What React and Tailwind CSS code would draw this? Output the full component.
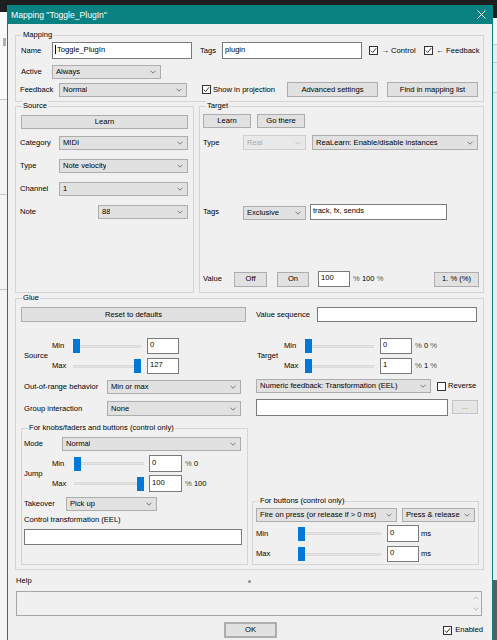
import React from "react";

const Chev = ({ color = "#5f5f5f" }) => (
  <svg width="6" height="4" viewBox="0 0 6 4" className="shrink-0">
    <path d="M0.5 0.7 L3 3.2 L5.5 0.7" stroke={color} strokeWidth="0.8" fill="none" />
  </svg>
);

const Sel = ({ text, cls = "", disabled = false }) => (
  <div
    className={`flex items-center justify-between shrink-0 border pl-[3px] pr-[4px] ${
      disabled ? "border-[#d0d0d0] bg-[#e9e9e9] text-[#a9a9a9]" : "border-[#adadad] bg-[#e1e1e1] text-black"
    } ${cls}`}
  >
    <span className="whitespace-nowrap overflow-hidden">{text}</span>
    <Chev color={disabled ? "#b8b8b8" : "#5f5f5f"} />
  </div>
);

const Btn = ({ children, cls = "" }) => (
  <div className={`flex items-center justify-center shrink-0 border border-[#adadad] bg-[#e1e1e1] whitespace-nowrap ${cls}`}>
    {children}
  </div>
);

const Inp = ({ children, cls = "" }) => (
  <div className={`flex items-center shrink-0 border border-[#7a7a7a] bg-white pl-[2px] pb-[2px] whitespace-nowrap ${cls}`}>
    {children}
  </div>
);

const Check = ({ checked = true, cls = "" }) => (
  <div className={`w-[9px] h-[9px] shrink-0 border border-[#333333] bg-white flex items-center justify-center ${cls}`}>
    {checked && (
      <svg width="7" height="7" viewBox="0 0 7 7">
        <path d="M0.8 3.6 L2.7 5.5 L6.2 1.2" stroke="#222222" strokeWidth="0.9" fill="none" />
      </svg>
    )}
  </div>
);

const Slider = ({ cls = "", right = false }) => (
  <div className={`relative shrink-0 flex items-center ${cls}`}>
    <div className="h-[3px] w-full bg-[#e4e4e4] border-y border-[#dadada]" />
    <div
      className={`absolute top-1/2 -translate-y-1/2 w-[7px] h-[14px] bg-[#0078d7] ${right ? "right-0" : "left-0"}`}
    />
  </div>
);

const Group = ({ title, cls = "", children }) => (
  <div className={`relative border border-[#d5d5d5] shrink-0 flex flex-col ${cls}`}>
    <span className="absolute -top-[6px] left-[6px] bg-[#f0f0f0] px-[1px] leading-[10px] whitespace-nowrap">
      {title}
    </span>
    {children}
  </div>
);

const Lbl = ({ children, cls = "" }) => <div className={`shrink-0 whitespace-nowrap ${cls}`}>{children}</div>;

export default function App() {
  return (
    <div className="w-[497px] h-[640px] overflow-hidden flex flex-col bg-[#f0f0f0] font-['Liberation_Sans',Arial,sans-serif] text-[7.6px] leading-[10px] text-black">
      <div className="h-[5px] shrink-0 bg-[#1e1e1e]" />
      <div className="flex flex-1 min-h-0">
        {/* left background strip */}
        <div className="w-[7px] shrink-0 flex flex-col bg-[#f4f4f4]">
          <div className="h-[7px] bg-[#1e1e1e]" />
          <div className="h-[88px] border-b border-[#c8c8c8] bg-[#fafafa]">
            <div className="mt-[26px] ml-[3px] w-[3px] h-[8px] bg-[#b0b0b0]" />
          </div>
          <div className="h-[95px] border-b border-[#c8c8c8]" />
          <div className="h-[95px] border-b border-[#c8c8c8]" />
          <div className="flex-1" />
        </div>

        {/* dialog window */}
        <div className="w-[486px] shrink-0 flex flex-col border-x border-[#0a8282] bg-[#f0f0f0]">
          <div className="h-[19px] shrink-0 bg-[#0a8282] flex items-center justify-between pl-[3px] pr-[6px] text-white text-[8.6px]">
            <span>Mapping "Toggle_PlugIn"</span>
            <svg width="9" height="9" viewBox="0 0 9 9">
              <path d="M0.5 0.5 L8.5 8.5 M8.5 0.5 L0.5 8.5" stroke="#ffffff" strokeWidth="0.9" />
            </svg>
          </div>

          <div className="flex flex-col pl-[7px] pr-[8px]">
            {/* Mapping */}
            <Group title="Mapping" cls="mt-[11px] w-[469px] h-[67px]">
              <div className="mt-[6px] h-[17px] flex items-center">
                <Lbl cls="ml-[5px] w-[31px]">Name</Lbl>
                <Inp cls="w-[140px] h-[17px] border-[#3d8ee0]">
                  <span className="w-[1px] h-[9px] bg-black mr-[1px]" />
                  Toggle_PlugIn
                </Inp>
                <Lbl cls="ml-[8px] w-[22px]">Tags</Lbl>
                <Inp cls="w-[140px] h-[17px]">plugin</Inp>
                <div className="ml-[7px] w-[55px] shrink-0 flex items-center">
                  <Check />
                  <span className="ml-[3px] whitespace-nowrap">
                    <b className="text-[8px]">→</b> Control
                  </span>
                </div>
                <div className="flex items-center">
                  <Check />
                  <span className="ml-[3px] whitespace-nowrap">
                    <b className="text-[8px]">←</b> Feedback
                  </span>
                </div>
              </div>
              <div className="mt-[6px] h-[14px] flex items-center">
                <Lbl cls="ml-[5px] w-[31px]">Active</Lbl>
                <Sel cls="w-[109px] h-[14px]" text="Always" />
              </div>
              <div className="mt-[3px] h-[15px] flex items-center">
                <Lbl cls="ml-[4px] w-[39px]">Feedback</Lbl>
                <Sel cls="w-[128px] h-[14px]" text="Normal" />
                <div className="ml-[15px] w-[85px] shrink-0 flex items-center">
                  <Check />
                  <span className="ml-[2px] whitespace-nowrap">Show in projection</span>
                </div>
                <Btn cls="w-[91px] h-[15px]">Advanced settings</Btn>
                <Btn cls="ml-[9px] w-[91px] h-[15px]">Find in mapping list</Btn>
              </div>
            </Group>

            {/* Source / Target */}
            <div className="mt-[4px] h-[187px] flex shrink-0">
              <Group title="Source" cls="w-[179px] h-[187px]">
                <Btn cls="mt-[8px] ml-[5px] w-[167px] h-[14px]">Learn</Btn>
                <div className="mt-[7px] h-[14px] flex items-center">
                  <Lbl cls="ml-[4px] w-[39px]">Category</Lbl>
                  <Sel cls="w-[129px] h-[14px]" text="MIDI" />
                </div>
                <div className="mt-[9px] h-[14px] flex items-center">
                  <Lbl cls="ml-[4px] w-[39px]">Type</Lbl>
                  <Sel cls="w-[129px] h-[14px]" text="Note velocity" />
                </div>
                <div className="mt-[9px] h-[14px] flex items-center">
                  <Lbl cls="ml-[4px] w-[39px]">Channel</Lbl>
                  <Sel cls="w-[129px] h-[14px]" text="1" />
                </div>
                <div className="mt-[9px] h-[14px] flex items-center">
                  <Lbl cls="ml-[4px] w-[78px]">Note</Lbl>
                  <Sel cls="w-[90px] h-[14px]" text="88" />
                </div>
              </Group>
              <Group title="Target" cls="ml-[5px] w-[285px] h-[187px]">
                <div className="mt-[7px] h-[14px] flex">
                  <Btn cls="ml-[3px] w-[48px] h-[14px]">Learn</Btn>
                  <Btn cls="ml-[6px] w-[48px] h-[14px]">Go there</Btn>
                </div>
                <div className="mt-[7px] h-[15px] flex items-center">
                  <Lbl cls="ml-[3px] w-[40px]">Type</Lbl>
                  <Sel cls="w-[63px] h-[15px]" text="Real" disabled />
                  <Sel cls="ml-[6px] w-[166px] h-[15px]" text="ReaLearn: Enable/disable instances" />
                </div>
                <div className="mt-[54px] h-[16px] flex items-end">
                  <Lbl cls="ml-[3px] w-[40px] self-center">Tags</Lbl>
                  <Sel cls="w-[63px] h-[14px]" text="Exclusive" />
                  <Inp cls="ml-[4px] w-[137px] h-[16px]">track, fx, sends</Inp>
                </div>
                <div className="mt-[51px] h-[16px] flex items-center">
                  <Lbl cls="ml-[3px] w-[31px]">Value</Lbl>
                  <Btn cls="w-[33px] h-[15px]">Off</Btn>
                  <Btn cls="ml-[10px] w-[32px] h-[15px]">On</Btn>
                  <Inp cls="ml-[9px] w-[32px] h-[16px]">100</Inp>
                  <span className="ml-[3px] whitespace-nowrap">
                    <span className="text-[#555555]">%</span> 100 <span className="text-[#555555]">%</span>
                  </span>
                  <Btn cls="ml-auto mr-[4px] w-[45px] h-[15px]">1. % (%)</Btn>
                </div>
              </Group>
            </div>

            {/* Glue */}
            <Group title="Glue" cls="mt-[5px] w-[469px] h-[272px] !flex-row">
              <div className="w-[232px] shrink-0 flex flex-col">
                <Btn cls="mt-[8px] ml-[5px] w-[225px] h-[15px]">Reset to defaults</Btn>
                <div className="mt-[16px] h-[36px] flex items-center">
                  <Lbl cls="ml-[8px] w-[28px]">Source</Lbl>
                  <div className="flex flex-col gap-[4px]">
                    <div className="h-[16px] flex items-center">
                      <Lbl cls="w-[21px]">Min</Lbl>
                      <Slider cls="w-[68px] h-[16px]" />
                      <Inp cls="ml-[6px] w-[32px] h-[16px]">0</Inp>
                    </div>
                    <div className="h-[16px] flex items-center">
                      <Lbl cls="w-[21px]">Max</Lbl>
                      <Slider cls="w-[68px] h-[16px]" right />
                      <Inp cls="ml-[6px] w-[32px] h-[16px]">127</Inp>
                    </div>
                  </div>
                </div>
                <div className="mt-[6px] h-[14px] flex items-center">
                  <Lbl cls="ml-[8px] w-[83px]">Out-of-range behavior</Lbl>
                  <Sel cls="w-[134px] h-[14px]" text="Min or max" />
                </div>
                <div className="mt-[7px] h-[15px] flex items-center">
                  <Lbl cls="ml-[8px] w-[83px]">Group interaction</Lbl>
                  <Sel cls="w-[134px] h-[15px]" text="None" />
                </div>
                <Group title="For knobs/faders and buttons (control only)" cls="mt-[12px] ml-[5px] w-[227px] h-[137px]">
                  <div className="mt-[8px] h-[14px] flex items-center">
                    <Lbl cls="ml-[2px] w-[38px]">Mode</Lbl>
                    <Sel cls="w-[179px] h-[14px]" text="Normal" />
                  </div>
                  <div className="mt-[4px] h-[37px] flex items-center">
                    <Lbl cls="ml-[2px] w-[28px]">Jump</Lbl>
                    <div className="flex flex-col gap-[3px]">
                      <div className="h-[17px] flex items-center">
                        <Lbl cls="w-[22px]">Min</Lbl>
                        <Slider cls="w-[70px] h-[17px]" />
                        <Inp cls="ml-[5px] w-[33px] h-[17px]">0</Inp>
                        <span className="ml-[3px] whitespace-nowrap">
                          <span className="text-[#555555]">%</span> 0
                        </span>
                      </div>
                      <div className="h-[17px] flex items-center">
                        <Lbl cls="w-[22px]">Max</Lbl>
                        <Slider cls="w-[70px] h-[17px]" right />
                        <Inp cls="ml-[5px] w-[33px] h-[17px]">100</Inp>
                        <span className="ml-[3px] whitespace-nowrap">
                          <span className="text-[#555555]">%</span> 100
                        </span>
                      </div>
                    </div>
                  </div>
                  <div className="mt-[5px] h-[14px] flex items-center">
                    <Lbl cls="ml-[2px] w-[42px]">Takeover</Lbl>
                    <Sel cls="w-[91px] h-[14px]" text="Pick up" />
                  </div>
                  <Lbl cls="mt-[4px] h-[10px] ml-[2px]">Control transformation (EEL)</Lbl>
                  <Inp cls="mt-[4px] ml-[2px] w-[218px] h-[16px]" />
                </Group>
              </div>

              <div className="flex-1 flex flex-col">
                <div className="mt-[8px] h-[15px] flex items-center">
                  <Lbl cls="ml-[8px] w-[61px]">Value sequence</Lbl>
                  <Inp cls="w-[160px] h-[15px]" />
                </div>
                <div className="mt-[16px] h-[36px] flex items-center">
                  <Lbl cls="ml-[9px] w-[27px]">Target</Lbl>
                  <div className="flex flex-col gap-[4px]">
                    <div className="h-[16px] flex items-center">
                      <Lbl cls="w-[21px]">Min</Lbl>
                      <Slider cls="w-[69px] h-[16px]" />
                      <Inp cls="ml-[6px] w-[32px] h-[16px]">0</Inp>
                      <span className="ml-[3px] whitespace-nowrap">
                        <span className="text-[#555555]">%</span> 0 <span className="text-[#555555]">%</span>
                      </span>
                    </div>
                    <div className="h-[16px] flex items-center">
                      <Lbl cls="w-[21px]">Max</Lbl>
                      <Slider cls="w-[69px] h-[16px]" />
                      <Inp cls="ml-[6px] w-[32px] h-[16px]">1</Inp>
                      <span className="ml-[3px] whitespace-nowrap">
                        <span className="text-[#555555]">%</span> 1 <span className="text-[#555555]">%</span>
                      </span>
                    </div>
                  </div>
                </div>
                <div className="mt-[5px] h-[14px] flex items-center">
                  <Sel cls="ml-[8px] w-[175px] h-[14px]" text="Numeric feedback: Transformation (EEL)" />
                  <Check checked={false} cls="ml-[6px]" />
                  <span className="ml-[2px] whitespace-nowrap">Reverse</span>
                </div>
                <div className="mt-[6px] h-[17px] flex items-start">
                  <Inp cls="ml-[8px] w-[192px] h-[17px]" />
                  <Btn cls="ml-[4px] mt-[1px] w-[26px] h-[14px] text-[#8a8a8a] border-[#c4c4c4] bg-[#e6e6e6]">...</Btn>
                </div>
                <Group title="For buttons (control only)" cls="mt-[85px] ml-[4px] w-[227px] h-[64px]">
                  <div className="mt-[6px] h-[14px] flex items-center">
                    <Sel cls="ml-[3px] w-[141px] h-[14px]" text="Fire on press (or release if > 0 ms)" />
                    <Sel cls="ml-[5px] w-[73px] h-[14px]" text="Press & release" />
                  </div>
                  <div className="mt-[3px] h-[17px] flex items-center">
                    <Lbl cls="ml-[3px] w-[42px]">Min</Lbl>
                    <Slider cls="w-[83px] h-[17px]" />
                    <Inp cls="ml-[6px] w-[32px] h-[17px]">0</Inp>
                    <span className="ml-[2px]">ms</span>
                  </div>
                  <div className="mt-[4px] h-[16px] flex items-center">
                    <Lbl cls="ml-[3px] w-[42px]">Max</Lbl>
                    <Slider cls="w-[83px] h-[16px]" />
                    <Inp cls="ml-[6px] w-[32px] h-[16px]">0</Inp>
                    <span className="ml-[2px]">ms</span>
                  </div>
                </Group>
              </div>
            </Group>

            {/* Help */}
            <div className="mt-[6px] h-[10px] flex items-center">
              <Lbl cls="ml-[1px] w-[232px]">Help</Lbl>
              <div className="w-[3px] h-[3px] rounded-full bg-[#8c8c8c]" />
            </div>
            <div className="mt-[5px] ml-[1px] w-[466px] h-[25px] shrink-0 border border-[#a6a6a6] bg-[#f0f0f0] flex justify-end">
              <div className="w-[11px] flex flex-col items-center justify-between py-[4px]">
                <svg width="6" height="4" viewBox="0 0 6 4">
                  <path d="M0.5 3.3 L3 0.8 L5.5 3.3" stroke="#a8a8a8" strokeWidth="0.8" fill="none" />
                </svg>
                <svg width="6" height="4" viewBox="0 0 6 4">
                  <path d="M0.5 0.7 L3 3.2 L5.5 0.7" stroke="#a8a8a8" strokeWidth="0.8" fill="none" />
                </svg>
              </div>
            </div>
            <div className="mt-[6px] h-[16px] flex items-center">
              <Btn cls="ml-[209px] w-[53px] h-[16px] border-[2px] border-[#2a7fd4]">OK</Btn>
              <div className="ml-auto mr-[1px] flex items-center">
                <Check />
                <span className="ml-[3px]">Enabled</span>
              </div>
            </div>
          </div>
        </div>

        {/* right background strip */}
        <div className="w-[4px] shrink-0 flex flex-col bg-[#ececec]">
          <div className="h-[13px] bg-[#1e1e1e]" />
          <div className="h-[27px] border-b border-[#c8c8c8] bg-[#f7f7f7]" />
          <div className="h-[18px] border-b border-[#c8c8c8]" />
          <div className="h-[30px] border-b border-[#c8c8c8]" />
          <div className="flex-1" />
          <div className="h-[60px] bg-[#5d5d5d]" />
        </div>
      </div>
    </div>
  );
}
